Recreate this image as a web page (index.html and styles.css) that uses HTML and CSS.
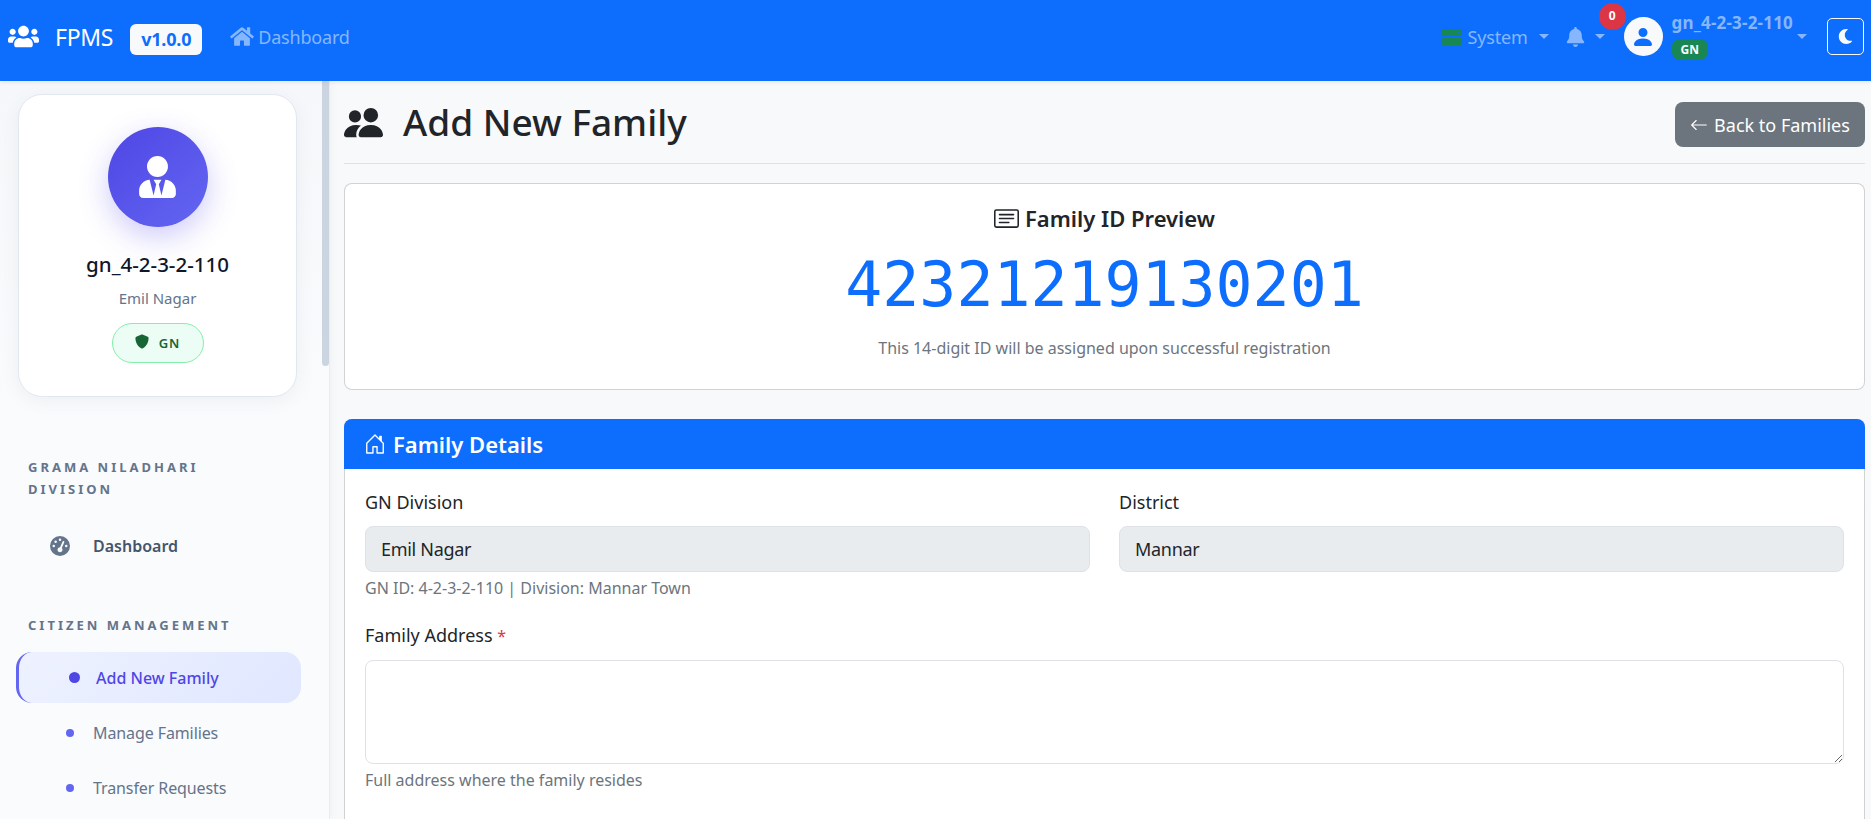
FILE: index.html
```html
<!DOCTYPE html>
<html lang="en">
<head>
    <meta charset="UTF-8">
    <title>Add New Family - FPMS</title>
    <link rel="stylesheet" href="styles.css">
</head>
<body>
<nav class="navbar">
    <svg class="nav-logo" viewBox="0 0 640 512"><path d="M96 224c35.3 0 64-28.7 64-64s-28.7-64-64-64-64 28.7-64 64 28.7 64 64 64zm448 0c35.3 0 64-28.7 64-64s-28.7-64-64-64-64 28.7-64 64 28.7 64 64 64zm32 32h-64c-17.6 0-33.5 7.1-45.1 18.6 40.3 22.1 68.9 62 75.1 109.4h66c17.7 0 32-14.3 32-32v-32c0-35.3-28.7-64-64-64zm-256 0c61.9 0 112-50.1 112-112S381.9 32 320 32 208 82.1 208 144s50.1 112 112 112zm76.8 32h-8.3c-20.8 10-43.9 16-68.5 16s-47.6-6-68.5-16h-8.3C179.6 288 128 339.6 128 403.2V432c0 26.5 21.5 48 48 48h288c26.5 0 48-21.5 48-48v-28.8c0-63.6-51.6-115.2-115.2-115.2zm-223.7-13.4C161.5 263.1 145.6 256 128 256H64c-35.3 0-64 28.7-64 64v32c0 17.7 14.3 32 32 32h65.9c6.3-47.4 34.9-87.3 75.2-109.4z"/></svg>
    <span class="brand">FPMS</span>
    <span class="version">v1.0.0</span>
    <a class="nav-link home-link">
        <svg class="home-icon" viewBox="0 0 576 512"><path d="M280.37 148.26L96 300.11V464a16 16 0 0 0 16 16l112.06-.29a16 16 0 0 0 15.92-16V368a16 16 0 0 1 16-16h64a16 16 0 0 1 16 16v95.64a16 16 0 0 0 16 16.05L464 480a16 16 0 0 0 16-16V300L295.67 148.26a12.19 12.19 0 0 0-15.3 0zM571.6 251.47L488 182.56V44.05a12 12 0 0 0-12-12h-56a12 12 0 0 0-12 12v72.61L318.47 43a48 48 0 0 0-61 0L4.34 251.47a12 12 0 0 0-1.6 16.9l25.5 31A12 12 0 0 0 45.15 301l235.22-193.74a12.19 12.19 0 0 1 15.3 0L530.9 301a12 12 0 0 0 16.9-1.6l25.5-31a12 12 0 0 0-1.7-16.93z"/></svg>
        Dashboard
    </a>
    <div class="nav-right">
        <a class="nav-link system-link">
            <svg class="server-icon" viewBox="0 0 20 16"><path fill-rule="evenodd" d="M1 0h18a1 1 0 0 1 1 1v5a1 1 0 0 1-1 1H1a1 1 0 0 1-1-1V1a1 1 0 0 1 1-1zm15.500 3a.5.5 0 1 0 0 1 .5.5 0 0 0 0-1zM1 9h18a1 1 0 0 1 1 1v5a1 1 0 0 1-1 1H1a1 1 0 0 1-1-1v-5a1 1 0 0 1 1-1zm15.500 3a.5.5 0 1 0 0 1 .5.5 0 0 0 0-1z"/></svg>
            System
            <span class="caret"></span>
        </a>
        <a class="nav-link bell-link">
            <svg class="bell-icon" viewBox="0 0 448 512"><path d="M224 512c35.32 0 63.97-28.65 63.97-64H160.03c0 35.35 28.65 64 63.97 64zm215.39-149.71c-19.32-20.76-55.47-51.99-55.47-154.29 0-77.7-54.48-139.9-127.94-155.16V32c0-17.67-14.32-32-31.98-32s-31.98 14.33-31.98 32v20.84C118.56 68.1 64.08 130.3 64.08 208c0 102.3-36.15 133.53-55.47 154.29-6 6.45-8.66 14.16-8.61 21.71.11 16.4 12.98 32 32.1 32h383.8c19.12 0 32-15.6 32.1-32 .05-7.55-2.61-15.27-8.61-21.71z"/></svg>
            <span class="caret"></span>
            <span class="notif-count">0</span>
        </a>
        <a class="nav-link user-link">
            <span class="user-avatar">
                <svg viewBox="0 0 16 16"><path d="M3 14s-1 0-1-1 1-4 6-4 6 3 6 4-1 1-1 1H3Zm5-6a3 3 0 1 0 0-6 3 3 0 0 0 0 6Z"/></svg>
            </span>
            <span class="user-info">
                <span class="user-name">gn_4-2-3-2-110</span>
                <span class="user-role">GN</span>
            </span>
            <span class="caret"></span>
        </a>
        <button class="theme-btn">
            <svg viewBox="0 0 512 512"><path d="M283.211 512c78.962 0 151.079-35.925 198.857-94.792 7.068-8.708-.639-21.43-11.562-19.35-124.203 23.654-238.262-71.576-238.262-196.954 0-72.222 38.662-138.635 101.498-174.394 9.686-5.512 7.25-20.197-3.756-22.23A258.156 258.156 0 0 0 283.211 0c-141.309 0-256 114.511-256 256 0 141.309 114.511 256 256 256z"/></svg>
        </button>
    </div>
</nav>

<div class="wrapper">
    <aside class="sidebar">
        <div class="profile-card">
            <div class="profile-avatar">
                <svg viewBox="0 0 448 512"><path d="M224 256c70.7 0 128-57.3 128-128S294.7 0 224 0 96 57.3 96 128s57.3 128 128 128zm95.8 32.600L272 480l-32-136 32-56h-96l32 56-32 136-47.800-191.400C56.900 292 0 350.300 0 422.400V464c0 26.500 21.500 48 48 48h352c26.500 0 48-21.500 48-48v-41.600c0-72.100-56.900-130.400-128.200-133.800z"/></svg>
            </div>
            <div class="profile-name">gn_4-2-3-2-110</div>
            <div class="profile-place">Emil Nagar</div>
            <span class="profile-role">
                <svg viewBox="0 0 512 512"><path d="M466.500 83.700l-192-80a48.150 48.150 0 0 0-36.900 0l-192 80C27.700 91.100 16 108.600 16 128c0 198.500 114.500 335.700 221.500 380.300 11.800 4.900 25.100 4.900 36.900 0C360.100 472.600 496 349.300 496 128c0-19.400-11.700-36.900-29.500-44.300z"/></svg>
                GN
            </span>
        </div>

        <div class="side-title first">Grama Niladhari Division</div>
        <a class="side-item dash-item">
            <svg viewBox="0 0 512 512"><path d="M0 256a256 256 0 1 1 512 0A256 256 0 1 1 0 256zM288 96a32 32 0 1 0 -64 0 32 32 0 1 0 64 0zM256 416c35.300 0 64-28.700 64-64c0-17.400-6.900-33.100-18.100-44.600L366 161.700c5.300-12.100-.2-26.300-12.300-31.600s-26.300 .2-31.600 12.300L257.900 288c-.6 0-1.300 0-1.900 0c-35.300 0-64 28.700-64 64s28.700 64 64 64zM176 144a32 32 0 1 0 -64 0 32 32 0 1 0 64 0zM96 288a32 32 0 1 0 0-64 32 32 0 1 0 0 64zm352-32a32 32 0 1 0 -64 0 32 32 0 1 0 64 0z"/></svg>
            Dashboard
        </a>

        <div class="side-title second">Citizen Management</div>
        <a class="side-item active"><span class="dot"></span>Add New Family</a>
        <a class="side-item sub"><span class="dot"></span>Manage Families</a>
        <a class="side-item sub"><span class="dot"></span>Transfer Requests</a>
        <div class="side-thumb"></div>
    </aside>

    <main class="content">
        <div class="page-head">
            <h1>
                <svg viewBox="0 0 16 16"><path d="M7 14s-1 0-1-1 1-4 5-4 5 3 5 4-1 1-1 1H7Zm4-6a3 3 0 1 0 0-6 3 3 0 0 0 0 6Zm-5.784 6A2.238 2.238 0 0 1 5 13c0-1.355.68-2.750 1.936-3.720A6.325 6.325 0 0 0 5 9c-4 0-5 3-5 4s1 1 1 1h4.216ZM4.500 8a2.500 2.500 0 1 0 0-5 2.500 2.500 0 0 0 0 5Z"/></svg>
                Add New Family
            </h1>
            <a class="back-btn">
                <svg viewBox="0 0 16 16"><path d="M15 8a.5.5 0 0 0-.5-.5H2.707l3.147-3.146a.5.5 0 1 0-.708-.708l-4 4a.5.5 0 0 0 0 .708l4 4a.5.5 0 0 0 .708-.708L2.707 8.500H14.500A.5.5 0 0 0 15 8z"/></svg>
                Back to Families
            </a>
        </div>

        <section class="card id-card">
            <h5>
                <svg viewBox="0 0 16 16"><path d="M14.500 3a.5.5 0 0 1 .5.5v9a.5.5 0 0 1-.5.5h-13a.5.5 0 0 1-.5-.5v-9a.5.5 0 0 1 .5-.5h13zm-13-1A1.500 1.500 0 0 0 0 3.500v9A1.500 1.500 0 0 0 1.500 14h13a1.500 1.500 0 0 0 1.500-1.500v-9A1.500 1.500 0 0 0 14.500 2h-13z"/><path d="M3 5.500a.5.5 0 0 1 .5-.5h9a.5.5 0 0 1 0 1h-9a.5.5 0 0 1-.5-.5zM3 8a.5.5 0 0 1 .5-.5h9a.5.5 0 0 1 0 1h-9A.5.5 0 0 1 3 8zm0 2.500a.5.5 0 0 1 .5-.5h6a.5.5 0 0 1 0 1h-6a.5.5 0 0 1-.5-.5z"/></svg>
                Family ID Preview
            </h5>
            <div class="family-id">42321219130201</div>
            <small class="muted">This 14-digit ID will be assigned upon successful registration</small>
        </section>

        <section class="card details-card">
            <div class="card-header">
                <svg viewBox="0 0 16 16"><path d="M8.354 1.146a.5.5 0 0 0-.708 0l-6 6A.5.5 0 0 0 1.500 7.500v7a.5.5 0 0 0 .5.5h4.500a.5.5 0 0 0 .5-.5v-4h2v4a.5.5 0 0 0 .5.5H14a.5.5 0 0 0 .5-.5v-7a.5.5 0 0 0-.146-.354L13 5.793V2.500a.5.5 0 0 0-.5-.5h-1a.5.5 0 0 0-.5.5v1.293L8.354 1.146zM2.500 14V7.707l5.500-5.500 5.500 5.500V14H10v-4a.5.5 0 0 0-.5-.5h-3a.5.5 0 0 0-.5.5v4H2.500z"/></svg>
                Family Details
            </div>
            <div class="card-body">
                <div class="form-row">
                    <div class="field">
                        <label>GN Division</label>
                        <input class="form-control" type="text" value="Emil Nagar" readonly>
                        <small class="muted">GN ID: 4-2-3-2-110 | Division: Mannar Town</small>
                    </div>
                    <div class="field">
                        <label>District</label>
                        <input class="form-control" type="text" value="Mannar" readonly>
                    </div>
                </div>
                <div class="field">
                    <label>Family Address <span class="req">*</span></label>
                    <textarea class="form-control address"></textarea>
                    <small class="muted">Full address where the family resides</small>
                </div>
            </div>
        </section>
    </main>
</div>
</body>
</html>
```

FILE: styles.css
```css
*{
    box-sizing: border-box;
}
html,body{
    height: 100%;
}
body{
    margin: 0;
    overflow: hidden;
    font-family: "Noto Sans", "Open Sans", Arial, sans-serif;
    font-size: 16px;
    color: #212529;
    background-color: #f8f9fa;
}
svg{
    fill: currentColor;
    flex: none;
}
a{
    text-decoration: none;
}

/* navbar */
.navbar{
    height: 81px;
    background-color: #0d6efd;
    display: flex;
    align-items: center;
    padding: 0 7px 8px 8px;
    position: relative;
    z-index: 2;
    box-shadow: 0 2px 4px rgba(0,0,0,.06);
}
.nav-logo{
    width: 31px;
    height: 25px;
    color: #fff;
}
.brand{
    color: #fff;
    font-size: 23px;
    margin-left: 16px;
    letter-spacing: -0.3px;
}
.version{
    background-color: #f8f9fa;
    color: #0d6efd;
    font-weight: 700;
    font-size: 18px;
    line-height: 31px;
    height: 31px;
    padding: 0 11px;
    border-radius: 6px;
    margin: 5px 0 0 17px;
    letter-spacing: -0.2px;
}
.nav-link{
    color: #86b7fe;
    display: flex;
    align-items: center;
    font-size: 18px;
    letter-spacing: -0.2px;
}
.home-link{
    margin-left: 28px;
}
.home-icon{
    width: 24px;
    height: 21px;
    margin-right: 4px;
}
.nav-right{
    margin-left: auto;
    display: flex;
    align-items: center;
}
.server-icon{
    width: 20px;
    height: 16px;
    color: #198754;
    margin-right: 6px;
}
.caret{
    display: inline-block;
    width: 0;
    height: 0;
    border-top: 5.5px solid #86b7fe;
    border-left: 5px solid transparent;
    border-right: 5px solid transparent;
    margin-left: 11px;
}
.bell-link{
    margin-left: 17px;
    position: relative;
}
.bell-icon{
    width: 19px;
    height: 20px;
}
.bell-link .caret{
    margin-left: 10px;
}
.notif-count{
    position: absolute;
    left: 33px;
    top: -24px;
    width: 27px;
    height: 27px;
    border-radius: 50%;
    background-color: #dc3545;
    color: #fff;
    font-size: 12px;
    font-weight: 700;
    letter-spacing: 0;
    text-align: center;
    line-height: 26px;
}
.user-link{
    margin-left: 19px;
}
.user-avatar{
    width: 39px;
    height: 39px;
    border-radius: 50%;
    background-color: #f8f9fa;
    color: #0d6efd;
    display: flex;
    align-items: center;
    justify-content: center;
}
.user-avatar svg{
    width: 24px;
    height: 24px;
}
.user-info{
    display: flex;
    flex-direction: column;
    align-items: flex-start;
    margin-left: 9px;
}
.user-name{
    font-size: 17px;
    font-weight: 700;
    line-height: 20px;
    letter-spacing: 0.2px;
}
.user-role{
    background-color: #198754;
    color: #fff;
    font-size: 12px;
    font-weight: 700;
    letter-spacing: 0;
    line-height: 21px;
    height: 21px;
    padding: 0 9px;
    border-radius: 8px;
    margin-top: 6px;
}
.user-link .caret{
    margin-left: 4px;
}
.theme-btn{
    width: 37px;
    height: 37px;
    margin-left: 20px;
    padding: 0;
    border: 1px solid #f8f9fa;
    border-radius: 5px;
    background: none;
    color: #f8f9fa;
    display: flex;
    align-items: center;
    justify-content: center;
}
.theme-btn svg{
    width: 15px;
    height: 15px;
}

/* sidebar */
.wrapper{
    display: flex;
    height: calc(100vh - 81px);
}
.sidebar{
    width: 330px;
    flex: none;
    position: relative;
    overflow: hidden;
    background: linear-gradient(180deg,#f6f7fa,#fafbfd 340px);
    border-right: 1px solid #e9edf3;
    box-shadow: 2px 0 8px rgba(15,23,42,.03);
    padding: 13px 0 0 0;
}
.side-thumb{
    position: absolute;
    top: 0;
    right: 0;
    width: 7px;
    height: 285px;
    background-color: #cbd5e1;
    border-radius: 0 0 4px 4px;
}
.profile-card{
    width: 279px;
    height: 303px;
    margin-left: 18px;
    background-color: #fff;
    border: 1px solid #e2e8f0;
    border-radius: 24px;
    box-shadow: 0 4px 20px rgba(15,23,42,.05);
    padding-top: 32px;
    display: flex;
    flex-direction: column;
    align-items: center;
}
.profile-avatar{
    width: 100px;
    height: 100px;
    border-radius: 50%;
    background: linear-gradient(135deg,#4f46e5,#6366f1);
    box-shadow: 0 10px 30px rgba(79,70,229,.28);
    color: #fff;
    display: flex;
    align-items: center;
    justify-content: center;
}
.profile-avatar svg{
    width: 37px;
    height: 42px;
}
.profile-name{
    margin-top: 23px;
    font-size: 20.5px;
    font-weight: 500;
    line-height: 28px;
    color: #0f172a;
}
.profile-place{
    margin-top: 10px;
    font-size: 15px;
    line-height: 20px;
    color: #64748b;
}
.profile-role{
    margin-top: 15px;
    width: 92px;
    height: 40px;
    border: 1px solid #86efac;
    border-radius: 20px;
    background-color: #ecfdf5;
    color: #166534;
    font-size: 13px;
    font-weight: 600;
    letter-spacing: 1px;
    display: flex;
    align-items: center;
    justify-content: center;
    gap: 10px;
}
.profile-role svg{
    width: 14px;
    height: 15px;
    margin-top: -3px;
}
.side-title{
    margin-left: 28px;
    width: 240px;
    font-size: 13px;
    font-weight: 700;
    line-height: 22px;
    letter-spacing: 3px;
    text-transform: uppercase;
    color: #64748b;
}
.side-title.first{
    margin-top: 59px;
}
.side-title.second{
    margin-top: 45px;
}
.side-item{
    display: flex;
    align-items: center;
    font-size: 16px;
    color: #64748b;
}
.dash-item{
    margin-top: 23px;
    height: 46px;
    padding-left: 50px;
    font-weight: 600;
    color: #475569;
}
.dash-item svg{
    width: 20px;
    height: 20px;
    margin-right: 23px;
    color: #64748b;
}
.active{
    width: 285px;
    height: 51px;
    margin: 16px 0 0 16px;
    padding-left: 50px;
    border-left: 3px solid #6366f1;
    border-radius: 16px;
    background: linear-gradient(135deg,#eef2ff,#e0e7ff);
    color: #4f46e5;
    font-weight: 500;
}
.active .dot{
    width: 11px;
    height: 11px;
    background-color: #4f46e5;
    margin-right: 16px;
}
.dot{
    display: block;
    flex: none;
    width: 8px;
    height: 8px;
    border-radius: 50%;
    background-color: #6366f1;
    margin-right: 19px;
}
.sub{
    height: 55px;
    padding-left: 66px;
    letter-spacing: -0.1px;
}
.active + .sub{
    margin-top: 2px;
}

/* content */
.content{
    flex: 1;
    min-width: 0;
    padding: 0 6px 0 14px;
    overflow: hidden;
}
.page-head{
    height: 83px;
    border-bottom: 1px solid #dee2e6;
    display: flex;
    align-items: center;
    justify-content: space-between;
}
h1{
    margin: 0;
    font-size: 37px;
    font-weight: 500;
    line-height: 44px;
    display: flex;
    align-items: center;
}
h1 svg{
    width: 39px;
    height: 39px;
    margin-right: 20px;
}
.back-btn{
    width: 190px;
    height: 45px;
    margin-top: 5px;
    background-color: #6c757d;
    color: #fff;
    border-radius: 8px;
    font-size: 18px;
    display: flex;
    align-items: center;
    justify-content: center;
    gap: 6px;
}
.back-btn svg{
    width: 18px;
    height: 18px;
}
.card{
    background-color: #fff;
    border: 1px solid rgba(0,0,0,.175);
    border-radius: 8px;
}
.id-card{
    height: 207px;
    margin-top: 19px;
    padding-top: 21px;
    text-align: center;
}
h5{
    margin: 0;
    font-size: 22px;
    font-weight: 600;
    line-height: 26px;
    display: flex;
    align-items: center;
    justify-content: center;
    gap: 6px;
}
h5 svg{
    width: 25px;
    height: 25px;
}
.family-id{
    margin-top: 18px;
    font-family: "DejaVu Sans Mono", "Liberation Mono", monospace;
    font-size: 61.5px;
    line-height: 72px;
    color: #0d6efd;
}
.muted{
    display: block;
    font-size: 16px;
    color: #6c757d;
    line-height: 22px;
}
.id-card .muted{
    margin-top: 16px;
}
.details-card{
    margin-top: 29px;
    border-bottom: none;
    border-radius: 8px 8px 0 0;
    height: 420px;
}
.card-header{
    height: 50px;
    margin: -1px -1px 0;
    background-color: #0d6efd;
    color: #fff;
    border-radius: 8px 8px 0 0;
    font-size: 22px;
    font-weight: 600;
    padding-left: 20px;
    display: flex;
    align-items: center;
    gap: 7px;
}
.card-header svg{
    width: 22px;
    height: 22px;
}
.card-body{
    padding: 21px 20px 0;
}
.form-row{
    display: flex;
    gap: 29px;
    margin-bottom: 24px;
}
.form-row .field{
    flex: 1;
    min-width: 0;
}
label{
    display: block;
    font-size: 18px;
    line-height: 24px;
    margin-bottom: 12px;
}
.req{
    color: #dc3545;
    font-size: 16px;
}
.form-control{
    display: block;
    width: 100%;
    height: 46px;
    padding: 0 15px;
    border: 1px solid #dee2e6;
    border-radius: 8px;
    font-family: inherit;
    font-size: 18px;
    letter-spacing: -0.3px;
    color: #212529;
    background-color: #e9ecef;
    outline: none;
}
.address{
    height: 104px;
    background-color: #fff;
}
.field .muted{
    margin-top: 5px;
}
```
